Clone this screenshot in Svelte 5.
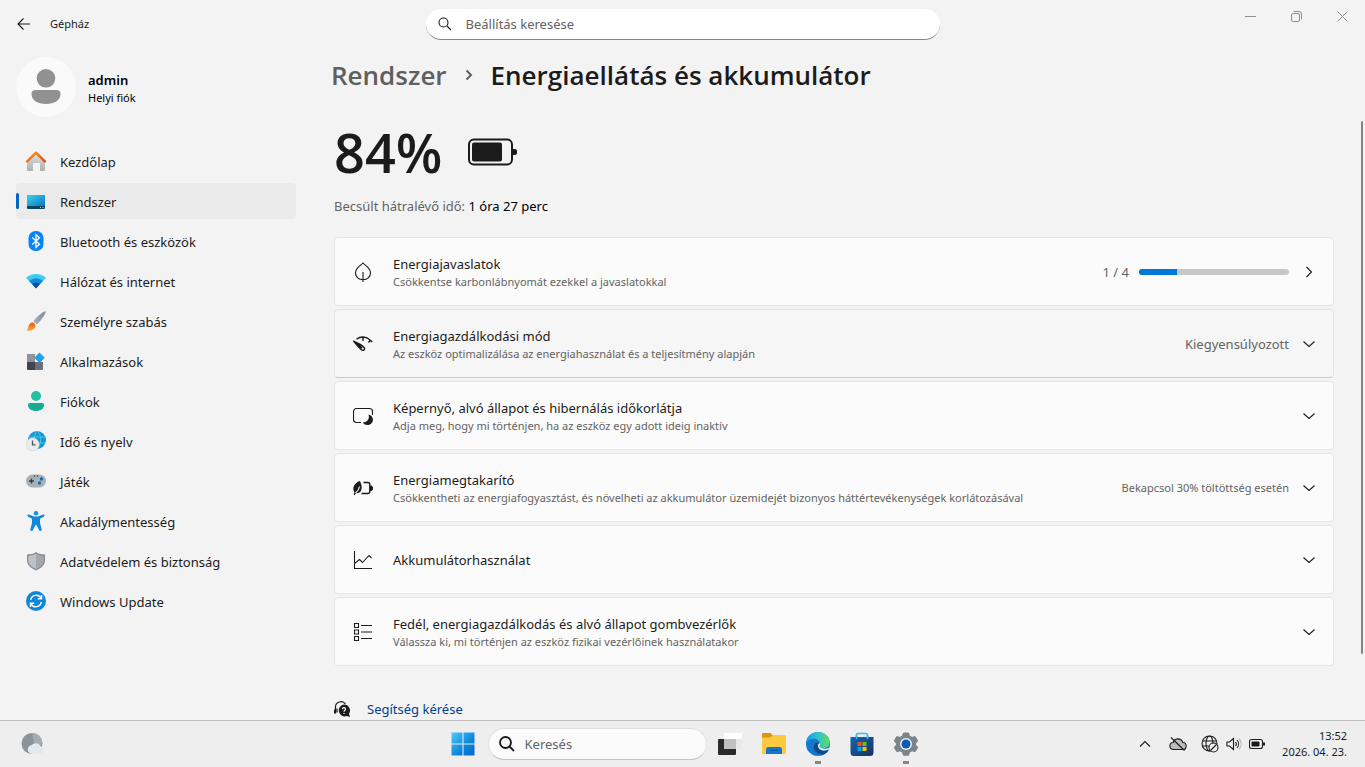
<script lang="ts">
  type NavItem = { id: string; label: string };
  type Card = {
    id: string;
    title: string;
    description?: string;
    value?: string;
    small?: boolean;
    hovered?: boolean;
  };

  const navItems: NavItem[] = [
    { id: 'home', label: 'Kezdőlap' },
    { id: 'system', label: 'Rendszer' },
    { id: 'bluetooth', label: 'Bluetooth és eszközök' },
    { id: 'network', label: 'Hálózat és internet' },
    { id: 'brush', label: 'Személyre szabás' },
    { id: 'apps', label: 'Alkalmazások' },
    { id: 'accounts', label: 'Fiókok' },
    { id: 'time', label: 'Idő és nyelv' },
    { id: 'gaming', label: 'Játék' },
    { id: 'access', label: 'Akadálymentesség' },
    { id: 'privacy', label: 'Adatvédelem és biztonság' },
    { id: 'update', label: 'Windows Update' },
  ];

  const cards: Card[] = [
    {
      id: 'leaf',
      title: 'Energiajavaslatok',
      description: 'Csökkentse karbonlábnyomát ezekkel a javaslatokkal',
    },
    {
      id: 'gauge',
      title: 'Energiagazdálkodási mód',
      description: 'Az eszköz optimalizálása az energiahasználat és a teljesítmény alapján',
      value: 'Kiegyensúlyozott',
      hovered: true,
    },
    {
      id: 'sleep',
      title: 'Képernyő, alvó állapot és hibernálás időkorlátja',
      description: 'Adja meg, hogy mi történjen, ha az eszköz egy adott ideig inaktív',
    },
    {
      id: 'saver',
      title: 'Energiamegtakarító',
      description:
        'Csökkentheti az energiafogyasztást, és növelheti az akkumulátor üzemidejét bizonyos háttértevékenységek korlátozásával',
      value: 'Bekapcsol 30% töltöttség esetén',
      small: true,
    },
    { id: 'usage', title: 'Akkumulátorhasználat' },
    {
      id: 'lid',
      title: 'Fedél, energiagazdálkodás és alvó állapot gombvezérlők',
      description: 'Válassza ki, mi történjen az eszköz fizikai vezérlőinek használatakor',
    },
  ];

  let active = $state('system');
  let query = $state('');
  let taskQuery = $state('');

  const recommendationsDone = 1;
  const recommendationsTotal = 4;
</script>

<svelte:head>
  <title>Gépház</title>
</svelte:head>

{#snippet navIcon(id: string)}
  <svg class="nav-icon" viewBox="0 0 20 20" aria-hidden="true">
    {#if id === 'home'}
      <defs>
        <linearGradient id="wall" x1="0" y1="0" x2="0" y2="1">
          <stop offset="0" stop-color="#e0e0e0" /><stop offset="1" stop-color="#b0b0b0" />
        </linearGradient>
        <linearGradient id="roof" x1="0" y1="0" x2="1" y2="1">
          <stop offset="0" stop-color="#ff9d1c" /><stop offset="1" stop-color="#d9480f" />
        </linearGradient>
      </defs>
      <path d="M1 10 10 2l9 8v9a1 1 0 0 1-1 1h-4v-7a1 1 0 0 0-1-1H8a1 1 0 0 0-1 1v7H2a1 1 0 0 1-1-1z" fill="url(#wall)" />
      <path d="M1.200 10.300 10 1.600l8.800 8.700" fill="none" stroke="url(#roof)" stroke-width="2.400" stroke-linecap="round" stroke-linejoin="round" />
    {:else if id === 'system'}
      <defs>
        <linearGradient id="screen" x1="0" y1="0" x2="1" y2="1">
          <stop offset="0" stop-color="#37d5ea" /><stop offset="1" stop-color="#0f73c4" />
        </linearGradient>
      </defs>
      <rect x="1" y="4" width="18" height="14" rx="1.200" fill="#0b4460" />
      <path d="M1 5.200A1.200 1.200 0 0 1 2.200 4h15.600A1.200 1.200 0 0 1 19 5.200V15H1z" fill="url(#screen)" />
      <path d="M14 16.500h1M16.500 16.500h1" stroke="#7fe0f5" />
    {:else if id === 'bluetooth'}
      <rect x="2.500" y="0" width="15" height="20" rx="7" fill="#0a84f5" />
      <path d="m6.300 6.600 7.200 6.600L10 16.300V3.700l3.500 3.100-7.200 6.600" fill="none" stroke="#fff" stroke-width="1.300" />
    {:else if id === 'network'}
      <path d="M0 7a14.500 14.500 0 0 1 20 0L10 17z" fill="#3ccbf4" />
      <path d="M3 10a10.200 10.200 0 0 1 14 0l-7 7z" fill="#1488dd" />
      <path d="M6 13a5.800 5.800 0 0 1 8 0l-3.400 4a.8.8 0 0 1-1.200 0z" fill="#0b4f9e" />
    {:else if id === 'brush'}
      <defs>
        <linearGradient id="handle" x1="1" y1="0" x2="0" y2="1">
          <stop offset="0" stop-color="#7f8b96" /><stop offset="1" stop-color="#aab4bd" />
        </linearGradient>
        <linearGradient id="tip" x1="0" y1="0" x2="0" y2="1">
          <stop offset="0" stop-color="#e8590c" /><stop offset="1" stop-color="#ffab38" />
        </linearGradient>
      </defs>
      <path d="M18.400.4c.9-.5 1.600.2 1.200 1.100-1.500 3.600-5 8.700-8.600 12L7.300 10.200C10 6.400 14.500 2.400 18.400.4z" fill="url(#handle)" />
      <path d="M5.400 11.800c1-.5 2.300-.2 3.300.9s1 2.600.3 3.900C7.600 19.400 3.600 20.300.5 19.400c1.700-1 1.500-2.400 2.100-4.400.4-1.500 1.300-2.600 2.800-3.200z" fill="url(#tip)" />
    {:else if id === 'apps'}
      <path d="M1 3h8v8H1z" fill="#8d959c" />
      <path d="M1 11h8v8H2a1 1 0 0 1-1-1z" fill="#3d454b" />
      <path d="M9 11h8v7a1 1 0 0 1-1 1H9z" fill="#687179" />
      <path d="m13.500 2 4.700 4.700-4.700 4.900-4.700-4.900z" fill="#1aa3ea" stroke="#1aa3ea" stroke-linejoin="round" />
    {:else if id === 'accounts'}
      <circle cx="10" cy="5" r="5" fill="#21c1a5" />
      <path d="M4 12h12a2 2 0 0 1 2 2c0 3.700-3.400 6-8 6s-8-2.300-8-6a2 2 0 0 1 2-2z" fill="#16ac93" />
    {:else if id === 'time'}
      <circle cx="11" cy="9" r="9" fill="#1795d3" />
      <path d="M3 6h16.500M11 0c-3 4-3 8-2 12M11 0c5 4 5 13 0 18M10 12h9" fill="none" stroke="#43cbe8" stroke-width="1" />
      <circle cx="6.700" cy="13.300" r="6.500" fill="#ececec" stroke="#c9c9c9" stroke-width=".5" />
      <path d="M6.500 9.500v4.300h3" fill="none" stroke="#555" stroke-width="1.300" />
    {:else if id === 'gaming'}
      <rect x="0" y="3.500" width="20" height="13" rx="6.500" fill="#a9b1b8" />
      <path d="M5.500 7.500v5M3 10h5M8 5h1M11 5h1" stroke="#333b42" stroke-width="1.300" />
      <circle cx="15.500" cy="8" r="1.700" fill="#0f6cbd" />
      <circle cx="13.500" cy="12" r="1.700" fill="#0f6cbd" />
    {:else if id === 'access'}
      <circle cx="10" cy="2.300" r="2.300" fill="#1492e2" />
      <path d="M3 3.600 8 5.500h4l5-1.900c1.400-.5 2.100 1.600.8 2.200L14 7.800V12l1.700 6.300c.3 1.600-1.900 2.300-2.500.9L10.500 14h-1l-2.700 5.200c-.6 1.400-2.800.7-2.500-.9L6 12V7.800L2.200 5.800C.9 5.200 1.600 3.100 3 3.600z" fill="#1088dc" />
    {:else if id === 'privacy'}
      <path d="M10 1c2.500 1.800 5.500 2.500 9 2.500V9c0 5-3.500 8.200-9 10.500C4.500 17.200 1 14 1 9V3.500C4.500 3.500 7.500 2.800 10 1z" fill="#858c93" />
      <path d="M10 2.500c2.300 1.500 4.800 2.200 7.700 2.300V9c0 4.200-3 7-7.700 9z" fill="#a1a8ae" />
      <path d="M10 2.500C7.700 4 5.200 4.700 2.300 4.800V9c0 4.200 3 7 7.700 9z" fill="#bcc2c7" />
    {:else if id === 'update'}
      <circle cx="10" cy="10" r="10" fill="#0d86dc" />
      <path d="M4.700 9A5.500 5.500 0 0 1 15 7.200M15.300 11A5.500 5.500 0 0 1 5 12.800" fill="none" stroke="#fff" stroke-width="1.500" />
      <path d="M15.500 4v3.700h-3.700M4.500 16v-3.700h3.700" fill="none" stroke="#fff" stroke-width="1.500" />
    {/if}
  </svg>
{/snippet}

{#snippet cardIcon(id: string)}
  <svg class="card-icon line" viewBox="0 0 20 20" aria-hidden="true">
    {#if id === 'leaf'}
      <path d="M10 1C8.500 3 2.500 5.500 2.500 11c0 4 3.200 6.700 7.500 6.700s7.500-2.700 7.500-6.700C17.500 5.500 11.500 3 10 1zM10 10v10" />
    {:else if id === 'gauge'}
      <path d="M3.500 5.300C7.500 2 13.500 2.200 17 6l2.300 2M17.300 6.300 15.500 8.500M10 3v4" stroke-width="1.400" />
      <path d="M1 7.500c3.500 1.500 8.500 4 10.200 6.200 1.200 1.700-.9 3.500-2.500 2.200C6.500 14 3 10.200 1 7.500zM1 7.500l8 6.500" stroke-width="1.400" />
    {:else if id === 'sleep'}
      <path d="M8 16.500H3.500a3 3 0 0 1-3-3v-8a3 3 0 0 1 3-3h13a3 3 0 0 1 3 3V9" />
      <path class="solid" d="M15.500 8.500c6.500 1.500 5.500 10.500-1 10.500-2 0-3.800-.8-4.800-2.500 4.300.2 7.300-3.500 5.800-8z" />
    {:else if id === 'saver'}
      <path d="M10.500 4.500h4.300a2 2 0 0 1 2 2v7a2 2 0 0 1-2 2H8.500" stroke-width="1.400" />
      <path class="solid" d="M17 7.500h1.500L20 9v2.500L18.500 13H17zM6.800 3C8.300 5.500 9 8 8.500 11c-.4 2.500-2 4.500-5.500 4.300l-1.500 2L.5 16.500l1-2C-1.500 10 1.500 5 6.800 3z" />
      <path d="M6.500 8.500C6.300 11 4.800 13 2.500 15" stroke="#fbfbfb" />
    {:else if id === 'usage'}
      <path d="M1.500 1v17.500H19M1.500 13.500l5-4 3 3 6.500-7 2.500 2.500" />
    {:else if id === 'lid'}
      <path d="M1.500 1.500h4v4h-4zM1.500 8h4v4h-4zM1.500 14.500h4v4h-4zM8 3.500h11M8 10h11M8 16.500h11" />
    {/if}
  </svg>
{/snippet}

<div class="desktop">
  <div class="window">
    <header class="titlebar">
      <div class="title-left">
        <button class="back" aria-label="Vissza">
          <svg class="line" width="14" height="14" viewBox="0 0 14 14"><path d="M13 7H1M6.500 1.500 1 7l5.500 5.500" /></svg>
        </button>
        <span class="app-name">Gépház</span>
      </div>
      <label class="search">
        <svg class="line" width="14" height="14" viewBox="0 0 14 14"><circle cx="5.500" cy="5.500" r="4.500" /><path d="m9 9 4 4" /></svg>
        <input type="text" bind:value={query} placeholder="Beállítás keresése" aria-label="Beállítás keresése" />
      </label>
      <div class="window-controls">
        <button aria-label="Kis méret"><svg width="11" height="11" viewBox="0 0 11 11"><path d="M0 5.500h11" /></svg></button>
        <button aria-label="Előző méret">
          <svg width="11" height="11" viewBox="0 0 11 11"><rect x=".5" y="2.500" width="8" height="8" rx="1.500" /><path d="M2.500.5H8A2.500 2.500 0 0 1 10.500 3v5.500" /></svg>
        </button>
        <button aria-label="Bezárás"><svg width="11" height="11" viewBox="0 0 11 11"><path d="m.5.5 10 10M10.500.5l-10 10" /></svg></button>
      </div>
    </header>

    <div class="body">
      <aside class="sidebar">
        <button class="account">
          <svg width="60" height="60" viewBox="0 0 60 60" aria-hidden="true">
            <circle cx="30" cy="30" r="30" fill="#fafafa" />
            <circle cx="30" cy="21.300" r="9.300" fill="#919191" />
            <path d="M19.500 33h21a4 4 0 0 1 4 4c0 6.500-6.500 10-14.500 10s-14.500-3.500-14.500-10a4 4 0 0 1 4-4z" fill="#919191" />
          </svg>
          <span class="account-text">
            <strong>admin</strong>
            <span>Helyi fiók</span>
          </span>
        </button>

        <nav class="nav">
          {#each navItems as item (item.id)}
            <button class="nav-item" class:active={active === item.id} onclick={() => (active = item.id)}>
              <span class="marker"></span>
              {@render navIcon(item.id)}
              <span class="nav-label">{item.label}</span>
            </button>
          {/each}
        </nav>
      </aside>

      <main class="content">
        <div class="breadcrumb">
          <a href="#system">Rendszer</a>
          <svg class="line crumb" width="8" height="12" viewBox="0 0 8 12" aria-hidden="true"><path d="m1.500 1.500 4.500 4.500-4.500 4.500" /></svg>
          <h1>Energiaellátás és akkumulátor</h1>
        </div>

        <section class="charge">
          <div class="level">
            <span>84%</span>
            <svg width="50" height="28" viewBox="0 0 50 28" aria-hidden="true">
              <rect x="1" y="1.500" width="43" height="25" rx="5" fill="none" stroke="#1b1b1b" stroke-width="2" />
              <rect x="4" y="4.500" width="30" height="19" rx="2" fill="#1b1b1b" />
              <path d="M45 11h2a2 2 0 0 1 2 2v2a2 2 0 0 1-2 2h-2z" fill="#1b1b1b" />
            </svg>
          </div>
          <p>Becsült hátralévő idő: <b>1 óra 27 perc</b></p>
        </section>

        <div class="cards">
          {#each cards as card (card.id)}
            <button class="card" class:hovered={card.hovered}>
              {@render cardIcon(card.id)}
              <span class="card-text">
                <span class="card-title">{card.title}</span>
                {#if card.description}
                  <span class="card-description">{card.description}</span>
                {/if}
              </span>
              {#if card.id === 'leaf'}
                <span class="card-value">{recommendationsDone} / {recommendationsTotal}</span>
                <progress value={recommendationsDone} max={recommendationsTotal} aria-label="Energiajavaslatok"></progress>
              {:else if card.value}
                <span class="card-value" class:small={card.small}>{card.value}</span>
              {/if}
              <svg class="line chevron" width="12" height="12" viewBox="0 0 12 12" aria-hidden="true">
                <path d={card.id === 'leaf' ? 'm3.500 1 5 5-5 5' : 'm.5 3.500 5.500 5 5.500-5'} />
              </svg>
            </button>
          {/each}
        </div>

        <div class="help">
          <svg width="18" height="18" viewBox="0 0 18 18" aria-hidden="true">
            <path d="M1.500 13.500V7.500a5.500 5.500 0 0 1 10-3.500M.5 9.500v4M3 8.500v4" fill="none" stroke="#1b1b1b" stroke-width="1.200" />
            <path d="M10 4.500a6 6 0 0 1 5 9.300l1 3.200-3.200-.9A6 6 0 1 1 10 4.500z" fill="#1b1b1b" />
            <path d="M8.500 9.200c0-2 3-2 3 0 0 1.200-1.500 1.100-1.500 2.600M10 13v1" fill="none" stroke="#fff" stroke-width="1.200" />
          </svg>
          <a href="#help">Segítség kérése</a>
        </div>
      </main>

      <div class="scrollbar"><span></span></div>
    </div>
  </div>

  <footer class="taskbar">
    <button class="weather" aria-label="Időjárás">
      <svg width="24" height="24" viewBox="0 0 24 24">
        <circle cx="12" cy="11.500" r="10.500" fill="#8c939c" />
        <path d="M12 1a10.500 10.500 0 0 1 10 12.500l-8-3z" fill="#a5abb3" />
        <path d="M12.500 22a4.500 4.500 0 0 1-.5-9 5 5 0 0 1 8.500 1.200 4 4 0 0 1-.5 7.800z" fill="#e4e9f0" />
      </svg>
    </button>

    <div class="task-center">
      <button class="task" aria-label="Start">
        <svg width="24" height="24" viewBox="0 0 24 24">
          <defs>
            <linearGradient id="start" x1="0" y1="0" x2="1" y2="1">
              <stop offset="0" stop-color="#4bcbfa" /><stop offset=".6" stop-color="#0c86dc" /><stop offset="1" stop-color="#0667c9" />
            </linearGradient>
          </defs>
          <path d="M.5.500h11v11H.5zM12.500.500h11v11h-11zM.5 12.500h11v11H.5zM12.500 12.500h11v11h-11z" fill="url(#start)" />
        </svg>
      </button>
      <label class="task-search">
        <svg width="16" height="16" viewBox="0 0 16 16"><circle cx="6.500" cy="6.500" r="5.500" /><path d="m10.500 10.500 4.500 4.500" /></svg>
        <input type="text" bind:value={taskQuery} placeholder="Keresés" aria-label="Keresés" />
      </label>
      <button class="task" aria-label="Feladatnézet">
        <svg width="24" height="24" viewBox="0 0 24 24">
          <rect x="0" y="7" width="18" height="16" rx="1" fill="#2b2b2b" />
          <rect x="6" y="1" width="18" height="16" rx="1" fill="#fff" />
          <path d="M6 7h12v10H6z" fill="#c1c1c1" /><path d="M18 7h6v10h-6z" fill="#e9e9e9" />
        </svg>
      </button>
      <button class="task" aria-label="Fájlkezelő">
        <svg width="24" height="24" viewBox="0 0 24 24">
          <path d="M0 2a1 1 0 0 1 1-1h7.500L11 3.500 9 7H0z" fill="#d9960c" />
          <path d="M9.500 4.500 11 3h12a1 1 0 0 1 1 1v17a1 1 0 0 1-1 1H1a1 1 0 0 1-1-1V5.500h7.500z" fill="#fcca3e" />
          <path d="M4 22v-4.500A2.500 2.500 0 0 1 6.500 15h11a2.500 2.500 0 0 1 2.500 2.500V22z" fill="#1277cc" />
          <path d="M8 18.500h8" stroke="#075ba8" />
        </svg>
      </button>
      <button class="task running" aria-label="Microsoft Edge">
        <svg width="24" height="24" viewBox="0 0 24 24">
          <defs>
            <linearGradient id="wave" x1="0" y1="0" x2="1" y2="0">
              <stop offset="0" stop-color="#1699dd" /><stop offset=".5" stop-color="#2cc3ce" /><stop offset="1" stop-color="#65dc58" />
            </linearGradient>
          </defs>
          <circle cx="12" cy="12" r="12" fill="#1479cf" />
          <path d="M12 0C5 0 .5 5 0 11c3-5 12-6 14 0 .5 1.500-.5 2.500-.5 3.500 0 2 7.500 3 9.700-1.500C25.500 6 19.500 0 12 0z" fill="url(#wave)" />
          <path d="M8.500 12c-2.500 4.500 1 11.500 9.500 10.500 2-1 4-3 5-5.300-5 2.600-10.500 1-10.500-3.500 0-1.200.5-2 1.200-2.500C12 10 9.800 10 8.500 12z" fill="#124a87" />
          <path d="M14 11c.4 1.500-.5 2.500-.5 3.500 0 2 6 3 9.900 1.300l-.6 1.600c-4.800 2.300-10.800.6-10.800-3.700 0-1.300.7-2.300 2-2.700z" fill="#eee" />
        </svg>
      </button>
      <button class="task" aria-label="Microsoft Store">
        <svg width="24" height="24" viewBox="0 0 24 24">
          <defs>
            <linearGradient id="bag" x1="0" y1="0" x2="1" y2="1">
              <stop offset="0" stop-color="#1266b5" /><stop offset="1" stop-color="#173260" />
            </linearGradient>
          </defs>
          <path d="M6.500 7V3A1.500 1.500 0 0 1 8 1.500h8A1.500 1.500 0 0 1 17.500 3v4" fill="none" stroke="#36bdf2" stroke-width="1.700" />
          <path d="M.5 5h23v15.500a3.500 3.500 0 0 1-3.500 3.500H4a3.500 3.500 0 0 1-3.500-3.500z" fill="url(#bag)" />
          <path d="M6.500 5V3.500M17.500 5V3.500M6.500 5v2M17.500 5v2" stroke="#36bdf2" stroke-width="1.700" />
          <path d="M7.500 10h4v4h-4z" fill="#f25022" /><path d="M12.500 10h4v4h-4z" fill="#7fba00" />
          <path d="M7.500 15h4v4h-4z" fill="#00a4ef" /><path d="M12.500 15h4v4h-4z" fill="#ffb900" />
        </svg>
      </button>
      <button class="task running" aria-label="Gépház">
        <svg width="24" height="24" viewBox="0 0 24 24">
          <path d="M9.500 1h5l1 3 2.500 1.400 3.200-.8L23.800 9l-2.300 2.200v1.800l2.300 2.200-2.600 4.400-3.200-.8-2.500 1.400-1 3h-5l-1-3L6 18.800l-3.200.8L.2 15.200 2.500 13v-1.800L.2 9l2.600-4.400 3.200.8L8.500 4z" fill="#7b838b" stroke="#7b838b" stroke-linejoin="round" />
          <circle cx="12" cy="12" r="6" fill="#eef2f6" />
          <circle cx="12" cy="12" r="4.500" fill="#0d5bb0" />
        </svg>
      </button>
    </div>

    <div class="tray">
      <button aria-label="Rejtett ikonok megjelenítése">
        <svg class="line" width="12" height="12" viewBox="0 0 12 12"><path d="m1 8.500 5-5 5 5" /></svg>
      </button>
      <button class="cloud" aria-label="OneDrive">
        <svg class="line" width="18" height="16" viewBox="0 0 18 16">
          <path class="shade" d="M4.500 13.500a3.500 3.500 0 0 1-.3-7 5 5 0 0 1 9.600 0 3.500 3.500 0 0 1-.3 7z" /><path d="m2 1.500 13.500 13" />
        </svg>
      </button>
      <button class="status" aria-label="Hálózat, hangerő és akkumulátor">
        <svg class="line" width="18" height="18" viewBox="0 0 18 18">
          <circle cx="8.500" cy="8.500" r="7.500" /><ellipse cx="8.500" cy="8.500" rx="3.500" ry="7.500" /><path d="M1.500 6h14M1.500 11h14" />
          <circle cx="12.500" cy="12.500" r="4.500" fill="#eee" /><path d="m9.500 15.500 6-6" />
        </svg>
        <svg class="line" width="16" height="16" viewBox="0 0 16 16">
          <path d="M1 6h2.500l4-3.500v11L3.500 10H1zM9.500 6a3 3 0 0 1 0 4M11 4a6 6 0 0 1 0 8" /><path class="faint" d="M13 2.500a8 8 0 0 1 0 11" />
        </svg>
        <svg class="line" width="16" height="12" viewBox="0 0 16 12">
          <rect x=".5" y="1.500" width="13" height="9" rx="2" /><rect class="solid" x="2.500" y="3.500" width="8" height="5" rx="1" /><path d="M15 4.500v3" stroke-width="2" />
        </svg>
      </button>
      <button class="clock">
        <span>13:52</span>
        <span>2026. 04. 23.</span>
      </button>
    </div>
  </footer>
</div>

<style>
  :global(body) {
    margin: 0;
    background: #f3f3f3;
  }

  .desktop {
    display: flex;
    flex-direction: column;
    height: 100vh;
    overflow: hidden;
    font-family: 'Noto Sans', 'Open Sans', sans-serif;
    font-size: 13px;
    line-height: 20px;
    color: #1b1b1b;
    background: #f3f3f3;
  }

  button {
    padding: 0;
    border: 0;
    background: none;
    font: inherit;
    color: inherit;
    text-align: left;
  }

  svg {
    display: block;
    flex: none;
  }

  .line {
    fill: none;
    stroke: #1b1b1b;
    stroke-width: 1.1;
  }

  .solid {
    fill: #1b1b1b;
    stroke: none;
  }

  .window {
    display: flex;
    flex: 1;
    flex-direction: column;
    min-height: 0;
  }

  .titlebar {
    display: grid;
    grid-template-columns: 1fr minmax(0, 514px) 1fr;
    height: 48px;
    flex: none;
  }

  .title-left {
    display: flex;
    align-items: center;
    gap: 19px;
    padding-left: 17px;
  }

  .app-name {
    font-size: 11px;
  }

  .search {
    display: flex;
    align-items: center;
    gap: 14px;
    height: 30px;
    margin-top: 9px;
    padding: 0 12px;
    border-bottom: 1px solid #868686;
    border-radius: 16px;
    background: #fff;
  }

  input {
    flex: 1;
    min-width: 0;
    padding: 0;
    border: 0;
    outline: 0;
    background: none;
    font: inherit;
    color: #1b1b1b;
  }

  input::placeholder {
    color: #636363;
    opacity: 1;
  }

  .window-controls {
    display: flex;
    justify-content: flex-end;
    height: 32px;
  }

  .window-controls button {
    display: grid;
    place-items: center;
    width: 46px;
  }

  .window-controls svg {
    fill: none;
    stroke: #8f8f8f;
  }

  .body {
    display: flex;
    flex: 1;
    min-height: 0;
  }

  .sidebar {
    display: flex;
    flex: none;
    flex-direction: column;
    gap: 26px;
    width: 280px;
    padding: 9px 0 0 16px;
  }

  .account {
    display: flex;
    align-items: center;
    gap: 12px;
  }

  .account-text {
    display: flex;
    flex-direction: column;
    padding-top: 2px;
    font-size: 11px;
    line-height: 16px;
    color: #000;
  }

  .account-text strong {
    font-size: 13px;
    font-weight: 600;
    line-height: 20px;
  }

  .nav {
    display: flex;
    flex-direction: column;
    gap: 4px;
  }

  .nav-item {
    display: flex;
    align-items: center;
    height: 36px;
    border-radius: 4px;
  }

  .nav-item.active {
    background: #eaeaea;
  }

  .nav-label {
    padding-top: 2px;
  }

  .marker {
    width: 3px;
    height: 16px;
    margin-right: 7px;
    border-radius: 2px;
  }

  .active .marker {
    background: #0067c0;
  }

  .nav-icon {
    width: 20px;
    height: 20px;
    margin-right: 14px;
  }

  .content {
    flex: 1;
    min-width: 0;
    padding: 9px 27px 0 38px;
    overflow: hidden;
  }

  .breadcrumb {
    display: flex;
    align-items: center;
    gap: 18px;
    margin-left: -3px;
    font-family: 'Open Sans', 'Noto Sans', sans-serif;
    font-size: 26px;
    font-weight: 600;
    line-height: 36px;
  }

  .breadcrumb a {
    color: #5f5f5f;
    text-decoration: none;
  }

  .breadcrumb h1 {
    margin: 0;
    font: inherit;
  }

  .crumb {
    stroke: #5f5f5f;
    stroke-width: 2;
  }

  .level {
    display: flex;
    align-items: center;
    gap: 26px;
    margin-top: 24px;
    font-family: 'Open Sans', 'Noto Sans', sans-serif;
    font-size: 54px;
    font-weight: 600;
    line-height: 70px;
  }

  .charge p {
    margin: 9px 0 21px;
    color: #636363;
  }

  .charge b {
    font-weight: 400;
    color: #000;
  }

  .cards {
    display: flex;
    flex-direction: column;
    gap: 3px;
  }

  .card {
    display: flex;
    align-items: center;
    width: 100%;
    height: 69px;
    padding: 0 18px;
    border: 1px solid #e5e5e5;
    border-radius: 4px;
    background: #fbfbfb;
  }

  .card.hovered {
    border-bottom-color: #cbcbcb;
    background: #f6f6f6;
  }

  .card-icon {
    width: 20px;
    height: 20px;
    margin-right: 20px;
  }

  .card-text {
    display: flex;
    flex: 1;
    flex-direction: column;
    min-width: 0;
  }

  .card-description {
    font-size: 11px;
    line-height: 16px;
    color: #636363;
  }

  .card-value {
    color: #636363;
  }

  .card-value.small {
    font-size: 11px;
  }

  progress {
    width: 150px;
    height: 6px;
    margin-left: 10px;
    border: 0;
    border-radius: 3px;
    overflow: hidden;
    appearance: none;
    background: #c8c8c8;
  }

  progress::-webkit-progress-bar {
    background: #c8c8c8;
  }

  progress::-webkit-progress-value {
    background: #0078d7;
  }

  .chevron {
    margin-left: 14px;
  }

  .help {
    display: flex;
    align-items: center;
    gap: 15px;
    margin-top: 33px;
  }

  .help a {
    color: #003e92;
    text-decoration: none;
  }

  .scrollbar {
    flex: none;
    width: 4px;
    padding-top: 73px;
  }

  .scrollbar span {
    display: block;
    width: 2px;
    height: 89%;
    border-radius: 1px;
    background: #858585;
  }

  .taskbar {
    display: grid;
    grid-template-columns: 1fr auto 1fr;
    align-items: center;
    flex: none;
    height: 46px;
    border-top: 1px solid #bebebe;
    background: #eee;
  }

  .weather {
    justify-self: start;
    margin-left: 20px;
  }

  .task-center {
    display: flex;
    align-items: center;
    padding-left: 3px;
  }

  .task {
    display: grid;
    place-items: center;
    width: 44px;
    height: 46px;
  }

  .running {
    background: linear-gradient(#868686, #868686) center 40px / 6px 3px no-repeat;
  }

  .task-search {
    display: flex;
    align-items: center;
    gap: 10px;
    box-sizing: border-box;
    width: 219px;
    height: 32px;
    margin: 0 1px 0 3px;
    padding: 0 10px;
    border: 1px solid #e0e0e0;
    border-bottom-color: #c4c4c4;
    border-radius: 16px;
    background: #fbfbfb;
  }

  .task-search svg {
    fill: none;
    stroke: #1b1b1b;
    stroke-width: 1.8;
  }

  .tray {
    display: flex;
    align-items: center;
    justify-content: flex-end;
    padding-right: 18px;
  }

  .cloud {
    margin: 0 14px 0 18px;
  }

  .shade {
    fill: #bbb;
  }

  .faint {
    stroke: #bbb;
  }

  .status {
    display: flex;
    align-items: center;
    gap: 7px;
  }

  .clock {
    display: flex;
    flex-direction: column;
    margin-left: 17px;
    font-size: 11px;
    line-height: 16px;
    text-align: right;
  }
</style>
